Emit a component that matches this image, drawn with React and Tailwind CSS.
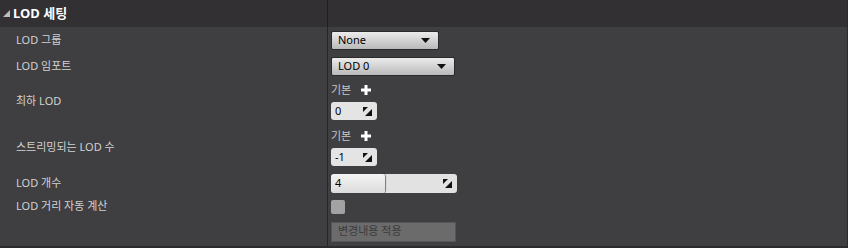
import React from "react";

const font = { fontFamily: '"Noto Sans", "Noto Sans CJK KR", sans-serif' };

function Caret() {
  return (
    <svg width="9" height="5" viewBox="0 0 9 5">
      <polygon points="0,0 9,0 4.5,5" fill="#111" />
    </svg>
  );
}

function Corner() {
  return (
    <svg width="9" height="9" viewBox="0 0 9 9">
      <polygon points="0,0 5,0 0,5" fill="#111" />
      <polygon points="9,2 9,9 2,9" fill="#111" />
    </svg>
  );
}

function Plus() {
  return (
    <svg width="10" height="10" viewBox="0 0 10 10">
      <rect x="3.5" y="0" width="3" height="10" fill="#fff" />
      <rect x="0" y="3.5" width="10" height="3" fill="#fff" />
    </svg>
  );
}

function Dropdown({ label, width }) {
  return (
    <div
      className={`${width} h-[19px] flex items-center justify-between pl-[6px] pr-[8px] rounded-[2px] border border-[#2a2a2a] bg-gradient-to-b from-[#ececec] to-[#b9b9b9] text-[11px] text-black`}
    >
      <span>{label}</span>
      <Caret />
    </div>
  );
}

function NumBox({ value }) {
  return (
    <div className="w-[46px] h-[18px] flex items-center justify-between pl-[4px] pr-[5px] rounded-[3px] bg-[#e4e4e4] text-[11px] text-black">
      <span>{value}</span>
      <Corner />
    </div>
  );
}

function Override({ value }) {
  return (
    <div className="flex flex-col gap-[5px]">
      <div className="flex items-center gap-[10px] h-[14px]">
        <span className="text-[11px] text-[#c8c8c8]">기본</span>
        <Plus />
      </div>
      <NumBox value={value} />
    </div>
  );
}

function Row({ label, h, children }) {
  return (
    <div className={`flex ${h}`}>
      <div className="w-[327px] flex items-center pl-[16px] text-[11px] text-[#d2d2d2]">{label}</div>
      <div className="w-px bg-[#252426]" />
      <div className="flex-1 flex items-center pl-[3px]">{children}</div>
    </div>
  );
}

export default function App() {
  return (
    <div className="w-[848px] h-[248px] bg-[#2b2b2b] overflow-hidden" style={font}>
      <div className="w-[847px] h-[246px] bg-[#3f3e41] flex flex-col">
        <div className="flex h-[27px] bg-[#323033]">
          <div className="w-[327px] flex items-center pl-[3px] gap-[3px]">
            <svg width="7" height="7" viewBox="0 0 7 7">
              <polygon points="7,0 7,7 0,7" fill="#bdbdbd" />
            </svg>
            <span className="text-[13px] font-bold text-white">LOD 세팅</span>
          </div>
          <div className="w-px bg-[#1e1d1f]" />
          <div className="flex-1" />
        </div>
        <Row label="LOD 그룹" h="h-[26px]">
          <Dropdown label="None" width="w-[108px]" />
        </Row>
        <Row label="LOD 임포트" h="h-[26px]">
          <Dropdown label="LOD 0" width="w-[124px]" />
        </Row>
        <Row label="최하 LOD" h="h-[45px]">
          <Override value="0" />
        </Row>
        <Row label="스트리밍되는 LOD 수" h="h-[47px]">
          <Override value="-1" />
        </Row>
        <Row label="LOD 개수" h="h-[25px]">
          <div className="w-[126px] h-[19px] flex rounded-[3px] bg-[#e2e2e2] text-[11px] text-black overflow-hidden">
            <div className="w-[54px] flex items-center pl-[4px] bg-gradient-to-b from-[#f4f4f4] to-[#dcdcdc] rounded-[3px] shadow-[1px_0_1px_#777]">4</div>
            <div className="flex-1 flex items-center justify-end pr-[5px]">
              <Corner />
            </div>
          </div>
        </Row>
        <Row label="LOD 거리 자동 계산" h="h-[21px]">
          <div className="w-[14px] h-[14px] rounded-[2px] bg-[#a2a2a2]" />
        </Row>
        <Row label="" h="h-[29px]">
          <div className="w-[125px] h-[20px] flex items-center pl-[6px] bg-[#6b6b6b] border border-[#555] text-[11px] text-[#3c3c3c]">
            변경내용 적용
          </div>
        </Row>
      </div>
    </div>
  );
}
